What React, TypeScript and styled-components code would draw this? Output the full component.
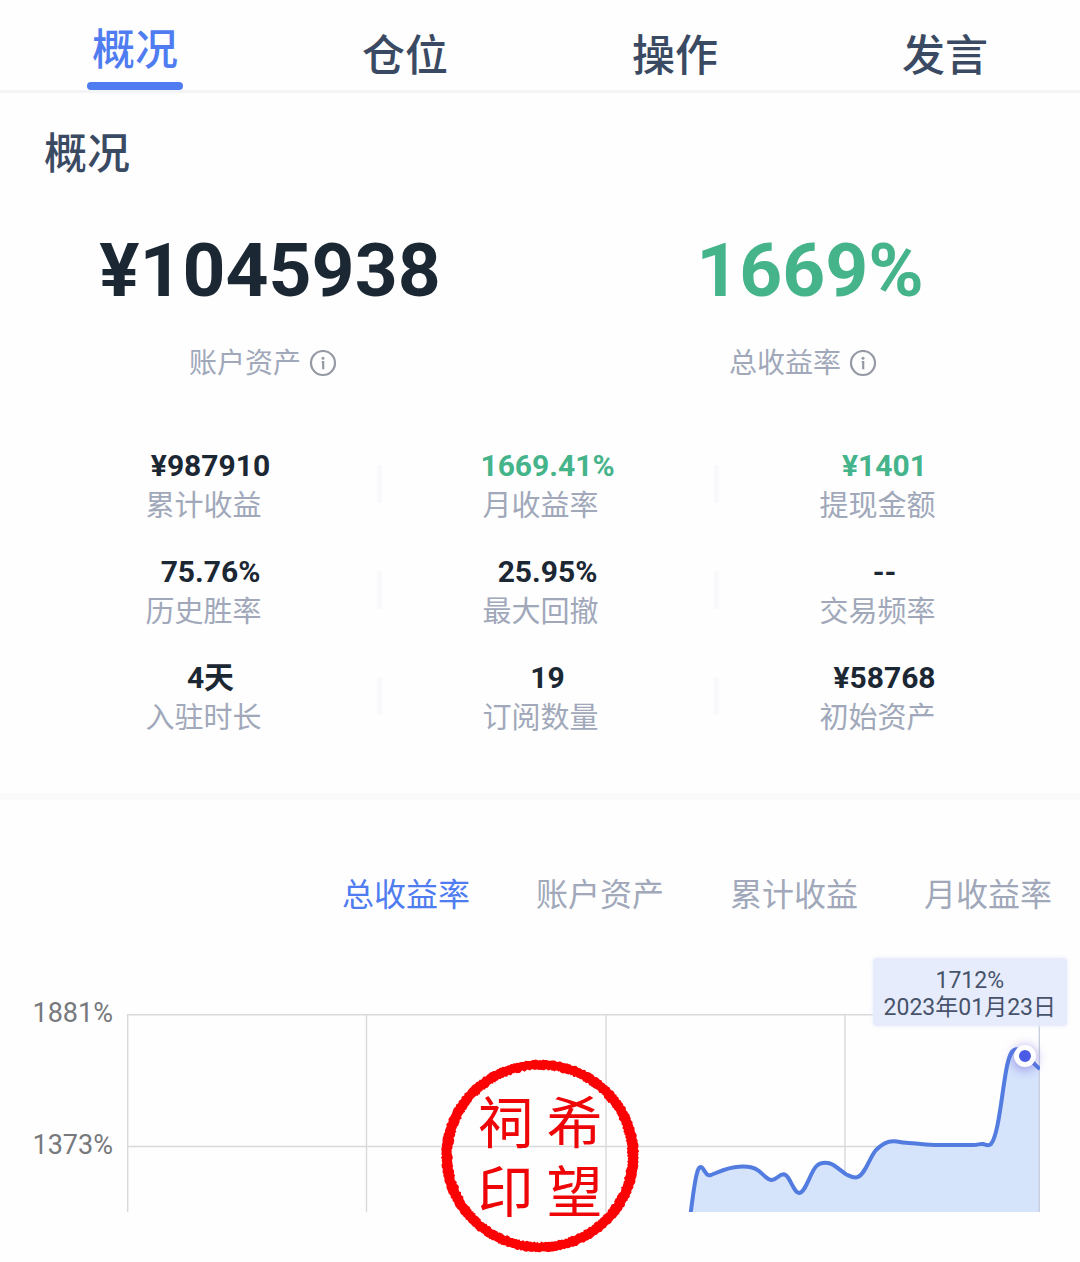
import React, { useState } from 'react';
import styled, { createGlobalStyle } from 'styled-components';

const colors = {
  blue: '#4f7cf0',
  slate: '#3b4a63',
  ink: '#1b2733',
  green: '#45b48b',
  muted: '#a0a8ba',
  axis: '#77797d',
};

const GlobalStyle = createGlobalStyle`
  *, *::before, *::after { box-sizing: border-box; }
  body {
    margin: 0;
    background: #fefefe;
    font-family: Roboto, "Noto Sans CJK SC", sans-serif;
  }
  button {
    border: 0;
    margin: 0;
    padding: 0;
    background: none;
    font: inherit;
    cursor: pointer;
  }
  h1, p, dl, dt, dd { margin: 0; }
`;

const Page = styled.main`
  width: 100%;
  overflow: hidden;
`;

const MainTabs = styled.nav`
  display: grid;
  grid-template-columns: repeat(4, 1fr);
  height: 93px;
  border-bottom: 3px solid #f4f4f6;
`;

const MainTab = styled.button<{ $active: boolean }>`
  display: flex;
  flex-direction: column;
  align-items: center;
  justify-content: flex-end;
  padding-bottom: ${(p) => (p.$active ? 0 : 2)}px;
  color: ${(p) => (p.$active ? colors.blue : colors.slate)};
  font-size: 43px;
  font-weight: 500;
  line-height: 64px;

  &::after {
    content: "";
    display: ${(p) => (p.$active ? 'block' : 'none')};
    width: 96px;
    height: 8px;
    border-radius: 4px;
    background: ${colors.blue};
  }
`;

const Overview = styled.section`
  padding-bottom: 54px;
  border-bottom: 7px solid #fafafb;
`;

const Title = styled.h1`
  padding: 29px 44px 0;
  color: ${colors.slate};
  font-size: 43px;
  font-weight: 500;
  line-height: 64px;
`;

const Headline = styled.div`
  display: grid;
  grid-template-columns: 1fr 1fr;
  padding-top: 40px;
`;

const HeadlineItem = styled.div`
  display: flex;
  flex-direction: column;
  align-items: center;
  gap: 30px;
`;

const HeadlineValue = styled.p<{ $green?: boolean }>`
  color: ${(p) => (p.$green ? colors.green : colors.ink)};
  font-size: 75px;
  font-weight: 700;
  line-height: 88px;
`;

const HeadlineLabel = styled.div`
  display: flex;
  align-items: center;
  gap: 8px;
  padding-right: 14px;
  color: ${colors.muted};
  font-size: 28px;
  line-height: 40px;
`;

const InfoButton = styled.button`
  display: flex;
  color: #9499a3;
`;

const Stats = styled.dl`
  display: grid;
  grid-template-columns: repeat(3, 1fr);
  row-gap: 26px;
  padding: 63px 27px 0 42px;
`;

const Stat = styled.div`
  position: relative;
  display: flex;
  flex-direction: column-reverse;
  align-items: center;

  &:not(:nth-child(3n))::after {
    content: "";
    position: absolute;
    top: 18px;
    right: -3px;
    width: 5px;
    height: 38px;
    background: #f9f9fc;
  }
`;

const StatLabel = styled.dt`
  padding-right: 14px;
  color: ${colors.muted};
  font-size: 29px;
  line-height: 42px;
`;

const StatValue = styled.dd<{ $green?: boolean }>`
  color: ${(p) => (p.$green ? colors.green : colors.ink)};
  font-size: 30px;
  font-weight: 700;
  line-height: 38px;
`;

const ChartSection = styled.section`
  position: relative;
  padding: 71px 0 50px;
`;

const ChartTabs = styled.div`
  display: flex;
  justify-content: flex-end;
  gap: 66px;
  padding-right: 28px;
`;

const ChartTab = styled.button<{ $active: boolean }>`
  color: ${(p) => (p.$active ? colors.blue : colors.muted)};
  font-size: 32px;
  line-height: 48px;
  white-space: nowrap;
`;

const Chart = styled.div`
  display: flex;
  padding: 95px 40px 0 0;
`;

const YAxis = styled.div`
  display: flex;
  flex-direction: column;
  gap: 100px;
  width: 127px;
  margin-top: -17px;
  padding-right: 14px;
  color: ${colors.axis};
  font-size: 27px;
  line-height: 32px;
  text-align: right;
`;

const Plot = styled.div`
  position: relative;
  flex: 1;
  height: 198px;
`;

const PlotSvg = styled.svg`
  display: block;
  width: 100%;
  height: 100%;
`;

const Marker = styled.span`
  position: absolute;
  width: 22px;
  height: 22px;
  border: 5px solid #fff;
  border-radius: 50%;
  background: #4a5be6;
  box-shadow: 0 2px 10px 2px rgba(110, 90, 220, 0.45);
  transform: translate(-50%, -50%);
`;

const Tooltip = styled.div`
  position: absolute;
  top: -56px;
  right: -27px;
  padding: 9px 11px 5px;
  border-radius: 4px;
  background: rgba(228, 235, 252, 0.93);
  box-shadow: 0 0 4px rgba(228, 235, 252, 0.9);
  color: #46536a;
  font-size: 23px;
  line-height: 27px;
  text-align: center;
  white-space: nowrap;
`;

const Seal = styled.div`
  position: absolute;
  bottom: 8px;
  left: 50%;
  display: grid;
  place-items: center;
  width: 200px;
  height: 196px;
  transform: translateX(-50%);
  pointer-events: none;
`;

const SealRing = styled.svg`
  position: absolute;
  inset: 0;
`;

const SealText = styled.div`
  display: grid;
  grid-template-columns: 69px 69px;
  direction: rtl;
  padding-top: 6px;
  color: #ee0508;
  font-size: 56px;
  font-weight: 400;
  line-height: 69px;
  text-align: center;
`;

function InfoIcon() {
  return (
    <svg width="28" height="28" viewBox="0 0 28 28" fill="none" stroke="currentColor" aria-hidden="true">
      <circle cx="14" cy="13" r="12" strokeWidth="2.2" />
      <circle cx="14" cy="8.2" r="1.5" fill="currentColor" stroke="none" />
      <path d="M12.8 12h1.4v7.2" strokeWidth="2.2" />
    </svg>
  );
}

function roughEdge(rx: number, ry: number, seed: number, depth: number) {
  let state = seed;
  const next = () => {
    state = (state * 16807) % 2147483647;
    return state / 2147483647;
  };
  const steps = 420;
  const points: string[] = [];
  for (let i = 0; i < steps; i += 1) {
    const angle = (i / steps) * Math.PI * 2;
    const offset = (next() - 0.5) * depth;
    const x = 100 + (rx + offset) * Math.cos(angle);
    const y = 98 + (ry + offset) * Math.sin(angle);
    points.push(`${x.toFixed(1)} ${y.toFixed(1)}`);
  }
  return `M${points.join('L')}Z`;
}

const ringPath = roughEdge(98.5, 96, 4217, 1.3) + roughEdge(87.8, 86.4, 911, 1.8);

const linePath =
  'M563.7 199C565.5 185 567.5 168 570 159C571.5 153 574 151 576.5 155.5' +
  'C579 159.5 580.5 162 584 161C593 157.5 601 153 612 152.7C622 152.3 627 153 632 157' +
  'C637 161 640 166 645 166C650 165.5 652 160.3 656.5 160.3C663 160.5 666 179 672.5 179' +
  'C679 178 684 156 690 151.5C695 147.5 702 148.5 706 150.7C712 154.5 716 158.5 719 160.2' +
  'C723 162 725 163.7 729.5 163.4C738 162 742 144 749 136C755 130 761 126.8 767 127.2' +
  'C773 127.5 773 128.6 779 128.8C790 129.2 800 131 810 131H847' +
  'C851 131 853 129.4 856 130C859 130.7 861 132.8 864 130' +
  'C872 120 875 76 880 52C882 43 884 36 889 35.3C897 35.5 905 49 913 55';

const headline = [
  { label: '账户资产', value: '¥1045938' },
  { label: '总收益率', value: '1669%', green: true },
];

const stats = [
  { label: '累计收益', value: '¥987910' },
  { label: '月收益率', value: '1669.41%', green: true },
  { label: '提现金额', value: '¥1401', green: true },
  { label: '历史胜率', value: '75.76%' },
  { label: '最大回撤', value: '25.95%' },
  { label: '交易频率', value: '--' },
  { label: '入驻时长', value: '4天' },
  { label: '订阅数量', value: '19' },
  { label: '初始资产', value: '¥58768' },
];

const mainTabs = ['概况', '仓位', '操作', '发言'];
const chartTabs = ['总收益率', '账户资产', '累计收益', '月收益率'];
const yTicks = ['1881%', '1373%'];
const columnLines = [0.7, 239.5, 479, 718];
const plotWidth = 913;
const activePoint = { x: 898, y: 42 };

export default function App() {
  const [tab, setTab] = useState(mainTabs[0]);
  const [series, setSeries] = useState(chartTabs[0]);

  return (
    <>
      <GlobalStyle />
      <Page>
        <MainTabs>
          {mainTabs.map((name) => (
            <MainTab key={name} type="button" $active={name === tab} onClick={() => setTab(name)}>
              {name}
            </MainTab>
          ))}
        </MainTabs>

        <Overview>
          <Title>概况</Title>
          <Headline>
            {headline.map((item) => (
              <HeadlineItem key={item.label}>
                <HeadlineValue $green={item.green}>{item.value}</HeadlineValue>
                <HeadlineLabel>
                  {item.label}
                  <InfoButton type="button" aria-label={item.label}>
                    <InfoIcon />
                  </InfoButton>
                </HeadlineLabel>
              </HeadlineItem>
            ))}
          </Headline>
          <Stats>
            {stats.map((item) => (
              <Stat key={item.label}>
                <StatLabel>{item.label}</StatLabel>
                <StatValue $green={item.green}>{item.value}</StatValue>
              </Stat>
            ))}
          </Stats>
        </Overview>

        <ChartSection>
          <ChartTabs>
            {chartTabs.map((name) => (
              <ChartTab key={name} type="button" $active={name === series} onClick={() => setSeries(name)}>
                {name}
              </ChartTab>
            ))}
          </ChartTabs>
          <Chart>
            <YAxis>
              {yTicks.map((tick) => (
                <span key={tick}>{tick}</span>
              ))}
            </YAxis>
            <Plot>
              <PlotSvg viewBox="0 0 913 198" preserveAspectRatio="none" aria-hidden="true">
                <g stroke="#d9d9dc" strokeWidth="1.4">
                  {columnLines.map((x) => (
                    <line key={x} x1={x} x2={x} y1="0" y2="198" />
                  ))}
                  <line x1="0" x2="913" y1="0.7" y2="0.7" />
                  <line x1="0" x2="913" y1="132.5" y2="132.5" />
                </g>
                <path d={`${linePath}V198H563.7Z`} fill="#d5e3fb" />
                <line x1="912.3" x2="912.3" y1="0" y2="198" stroke="#c9cfdf" strokeWidth="1.4" />
                <path
                  d={linePath}
                  fill="none"
                  stroke="#527ce0"
                  strokeWidth="4"
                  strokeLinejoin="round"
                  vectorEffect="non-scaling-stroke"
                />
              </PlotSvg>
              <Marker style={{ left: `${(activePoint.x / plotWidth) * 100}%`, top: activePoint.y }} />
              <Tooltip>
                <div>1712%</div>
                <div>2023年01月23日</div>
              </Tooltip>
            </Plot>
          </Chart>
          <Seal>
            <SealRing viewBox="0 0 200 196" aria-hidden="true">
              <path d={ringPath} fill="#fb0205" fillRule="evenodd" />
            </SealRing>
            <SealText>
              <span>希</span>
              <span>祠</span>
              <span>望</span>
              <span>印</span>
            </SealText>
          </Seal>
        </ChartSection>
      </Page>
    </>
  );
}
